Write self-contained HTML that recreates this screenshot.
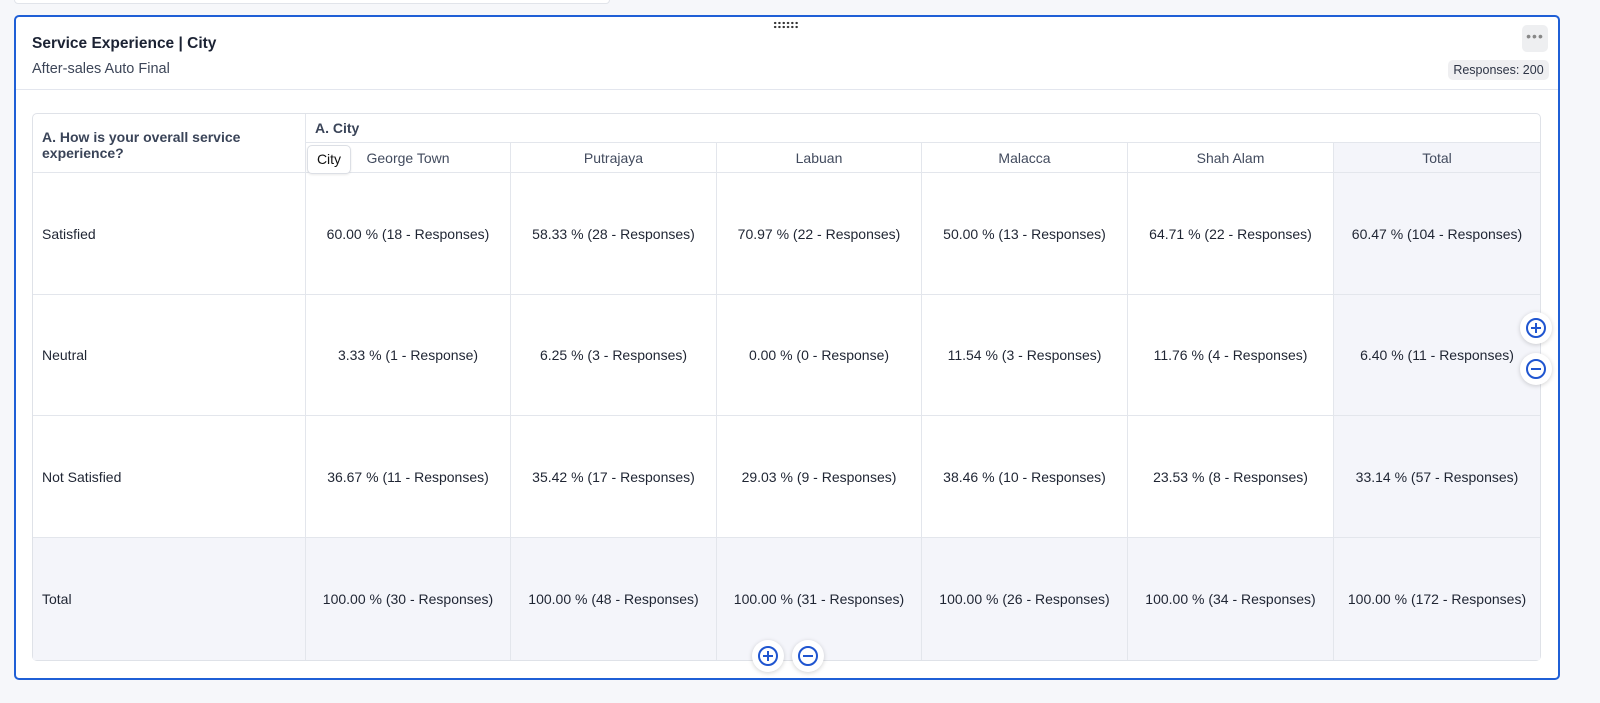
<!DOCTYPE html>
<html><head><style>
*{box-sizing:border-box;margin:0;padding:0}
body{width:1600px;height:703px;background:#f6f7fa;font-family:"Liberation Sans",sans-serif;position:relative;overflow:hidden;color:#1f2533}
.top{position:absolute;left:14px;top:-6px;width:596px;height:10px;background:#fff;border:1px solid #e1e4ea;border-radius:4px}
.card{position:absolute;left:14px;top:15px;width:1546px;height:665px;background:#fff;border:2px solid #1f5fd6;border-radius:5px}
.title{position:absolute;left:16px;top:18px;font-size:15.5px;font-weight:bold;color:#1b2233}
.sub{position:absolute;left:16px;top:44px;font-size:14.5px;color:#3d4658}
.hr{position:absolute;left:0;right:0;top:72px;border-top:1px solid #e3e6ee}
.drag{position:absolute;left:757px;top:4px;width:26px;height:8px;background-image:radial-gradient(circle,#333 1.1px,transparent 1.3px);background-size:4.3px 4px}
.dots{position:absolute;left:1506px;top:8px;width:26px;height:27px;background:#eeeff1;border-radius:5px;text-align:center;font-size:14px;color:#888;line-height:22px;letter-spacing:1px}
.badge{position:absolute;left:1432px;top:43px;width:101px;height:20px;background:#efeff1;border-radius:5px;font-size:12.5px;color:#2d3445;text-align:center;line-height:20px}
table{position:absolute;left:16px;top:96px;width:1509px;border-collapse:separate;border-spacing:0;border:1px solid #dfe2e8;border-radius:5px;font-size:14px}
td{border-right:1px solid #e3e6ec;border-bottom:1px solid #e3e6ec;text-align:center;color:#1f2533}
td:last-child{border-right:none}
tr:last-child td{border-bottom:none}
.l{text-align:left;padding-left:9px}
.h{font-weight:bold;color:#3a4458}
.tot{background:#f4f5fa}
.c{color:#424b5e}
.btn{position:absolute;width:32px;height:32px;border-radius:50%;background:#fff;box-shadow:0 1px 5px rgba(0,0,0,.18)}
.btn svg{position:absolute;left:5px;top:5px}
</style></head><body>
<div class="top"></div>
<div class="card">
<div class="drag"></div>
<div class="title">Service Experience | City</div>
<div class="sub">After-sales Auto Final</div>
<div class="dots">•••</div>
<div class="badge">Responses: 200</div>
<div class="hr"></div>
<table>
<colgroup><col style="width:273px"><col style="width:205px"><col style="width:206px"><col style="width:205px"><col style="width:206px"><col style="width:206px"><col></colgroup>
<tr style="height:29px"><td class="l h" rowspan="2" style="line-height:16px;padding-top:4px">A. How is your overall service experience?</td><td class="l h" colspan="6" style="padding-left:9px">A. City</td></tr>
<tr style="height:30px"><td class="c" style="position:relative"><span style="position:absolute;left:1px;top:2px;width:44px;height:29px;border:1px solid #dcdfe5;border-radius:5px;background:#fff;line-height:27px;color:#111;box-shadow:0 1px 2px rgba(0,0,0,.08)">City</span>George Town</td><td class="c">Putrajaya</td><td class="c">Labuan</td><td class="c">Malacca</td><td class="c">Shah Alam</td><td class="c tot">Total</td></tr>
<tr style="height:122px"><td class="l">Satisfied</td><td>60.00 % (18 - Responses)</td><td>58.33 % (28 - Responses)</td><td>70.97 % (22 - Responses)</td><td>50.00 % (13 - Responses)</td><td>64.71 % (22 - Responses)</td><td class="tot">60.47 % (104 - Responses)</td></tr>
<tr style="height:121px"><td class="l">Neutral</td><td>3.33 % (1 - Response)</td><td>6.25 % (3 - Responses)</td><td>0.00 % (0 - Response)</td><td>11.54 % (3 - Responses)</td><td>11.76 % (4 - Responses)</td><td class="tot">6.40 % (11 - Responses)</td></tr>
<tr style="height:122px"><td class="l">Not Satisfied</td><td>36.67 % (11 - Responses)</td><td>35.42 % (17 - Responses)</td><td>29.03 % (9 - Responses)</td><td>38.46 % (10 - Responses)</td><td>23.53 % (8 - Responses)</td><td class="tot">33.14 % (57 - Responses)</td></tr>
<tr style="height:122px" class="tot"><td class="l tot">Total</td><td class="tot">100.00 % (30 - Responses)</td><td class="tot">100.00 % (48 - Responses)</td><td class="tot">100.00 % (31 - Responses)</td><td class="tot">100.00 % (26 - Responses)</td><td class="tot">100.00 % (34 - Responses)</td><td class="tot">100.00 % (172 - Responses)</td></tr>
</table>
</div>
<div class="btn" style="left:1520px;top:312px"><svg width="22" height="22" viewBox="0 0 22 22" fill="none" stroke="#1f55d0" stroke-width="2"><circle cx="11" cy="11" r="9"/><path d="M11 6v10M6 11h10"/></svg></div>
<div class="btn" style="left:1520px;top:353px"><svg width="22" height="22" viewBox="0 0 22 22" fill="none" stroke="#1f55d0" stroke-width="2"><circle cx="11" cy="11" r="9"/><path d="M6 11h10"/></svg></div>
<div class="btn" style="left:752px;top:640px"><svg width="22" height="22" viewBox="0 0 22 22" fill="none" stroke="#1f55d0" stroke-width="2"><circle cx="11" cy="11" r="9"/><path d="M11 6v10M6 11h10"/></svg></div>
<div class="btn" style="left:792px;top:640px"><svg width="22" height="22" viewBox="0 0 22 22" fill="none" stroke="#1f55d0" stroke-width="2"><circle cx="11" cy="11" r="9"/><path d="M6 11h10"/></svg></div>
</body></html>
